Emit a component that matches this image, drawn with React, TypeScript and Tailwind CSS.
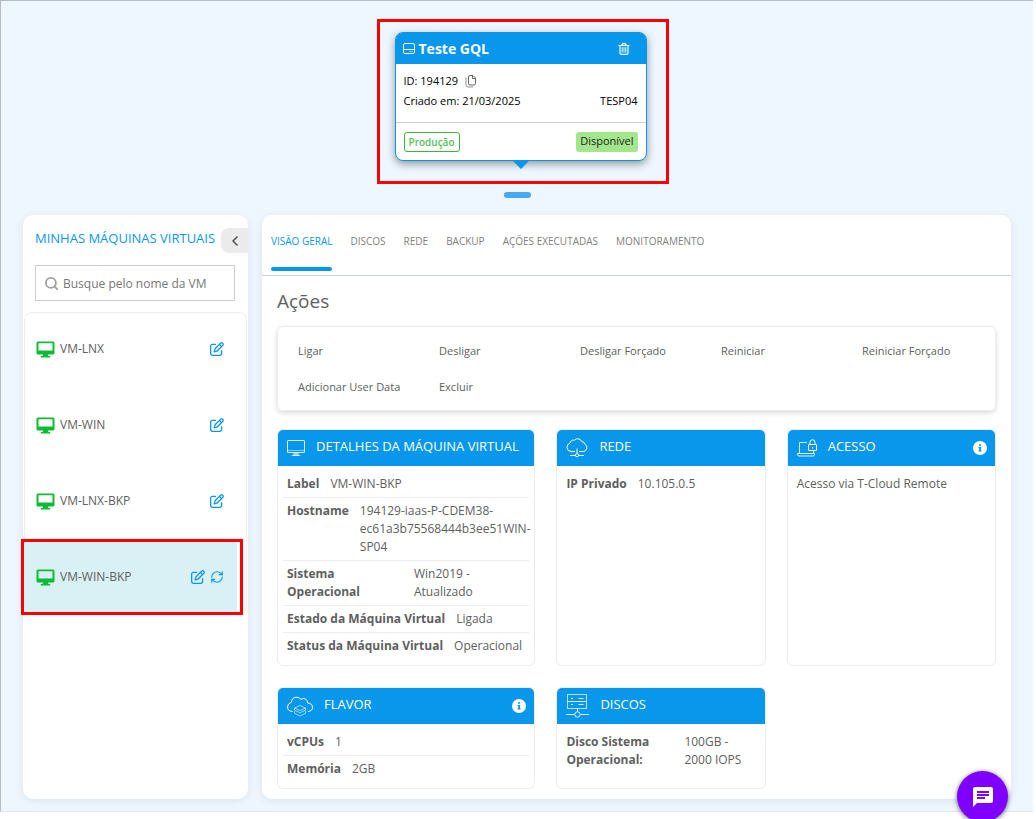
import { useState } from "react";
import type { ReactNode } from "react";
import clsx from "clsx";
import { ChevronLeft, RefreshCw, Search } from "lucide-react";
import { FaRegPenToSquare } from "react-icons/fa6";
import { MdChat } from "react-icons/md";

const machines = ["VM-LNX", "VM-WIN", "VM-LNX-BKP", "VM-WIN-BKP"];
const tabs = ["Visão geral", "Discos", "Rede", "Backup", "Ações executadas", "Monitoramento"];
const actions = ["Ligar", "Desligar", "Desligar Forçado", "Reiniciar", "Reiniciar Forçado", "Adicionar User Data", "Excluir"];

const DriveIcon = () => (
  <svg viewBox="0 0 12 12" className="w-3 h-3" fill="none" stroke="currentColor">
    <rect x="0.5" y="0.5" width="11" height="10" rx="1.5" />
    <path d="M0.5 6.500h11M6.500 8.500h1M8.500 8.500h1" />
  </svg>
);

const TrashIcon = () => (
  <svg viewBox="0 0 12 12" className="w-3 h-3" fill="none" stroke="currentColor" strokeLinecap="round">
    <path d="M1 2.500h10M3.700 2.300l1-1.600h2.600l1 1.600" strokeWidth="1.2" />
    <path d="M2 2.500v7.500q0 1.400 1.400 1.400h5.200q1.400 0 1.400-1.400V2.500" strokeWidth="1.2" />
    <path d="M4.200 4.500v4.700M6 4.500v4.700M7.800 4.500v4.700" strokeWidth="0.9" />
  </svg>
);

const CopyIcon = () => (
  <svg viewBox="0 0 12 13" className="w-3 h-[13px]" fill="none" stroke="currentColor">
    <path d="M5 .5h3L10.500 3v5.500q0 1.500-1.500 1.500H5q-1.500 0-1.500-1.500V2Q3.500.5 5 .5z" />
    <path d="M7.500.7v2.800h2.800" />
    <path d="M1 2.500v7.500q0 2 2 2h5" strokeOpacity="0.7" />
  </svg>
);

const MonitorIcon = () => (
  <svg viewBox="0 0 19 17" className="w-[19px] h-[17px] text-[#0dbb36]">
    <path
      fill="currentColor"
      fillRule="evenodd"
      d="M2 .5h15q1.500 0 1.500 1.500v10q0 1.500-1.500 1.500h-5l.4 1.500h1.800V16.500H4.800V15h1.800l.4-1.500H2q-1.500 0-1.500-1.500V2Q.5.5 2 .5zM2.500 2.300v7.200h14V2.300z"
    />
  </svg>
);

const ScreenIcon = () => (
  <svg viewBox="0 0 18 17" className="w-[18px] h-[17px]" fill="none" stroke="currentColor" strokeOpacity="0.85">
    <rect x="0.5" y="0.5" width="17" height="12" rx="0.5" />
    <path d="M1 10.500h16" strokeOpacity="0.5" />
    <path d="M7 13h4l2 3H5z" fill="currentColor" fillOpacity="0.6" stroke="none" />
    <path d="M4.500 15.500h9" strokeOpacity="0.5" />
  </svg>
);

const CloudNetworkIcon = () => (
  <svg viewBox="0 0 22 20" className="w-[22px] h-5" fill="none" stroke="currentColor">
    <path d="M9 13.500H5a4.300 4.300 0 0 1-1-8.400Q5 1.500 8.300 2.200 10.200.1 13 1q2.200.8 2.800 2.700 2.600.1 3.500 2.800a3.900 3.900 0 0 1-1.800 7H13" />
    <path d="M11 10.500V15M4 17.500h5M13 17.500h5" />
    <circle cx="11" cy="17.200" r="1.600" />
  </svg>
);

const LaptopLockIcon = () => (
  <svg viewBox="0 0 20 18" className="w-5 h-[18px]" fill="none" stroke="currentColor">
    <path d="M10 3.500H2.500V14M16.500 12v2" strokeOpacity="0.8" />
    <path d="M.5 14.500h17v1q0 1.500-1.500 1.500H2Q.5 17 .5 15.500z" strokeOpacity="0.9" />
    <rect x="11.5" y="5.5" width="8" height="6" rx="0.5" />
    <path d="M13 5.500V3.500q0-2.800 2.500-2.800T18 3.500v2M15.500 8v1.500" />
  </svg>
);

const CloudLayersIcon = () => (
  <svg viewBox="0 0 26 21" className="w-[26px] h-[21px]" fill="none" stroke="currentColor">
    <path d="M5.500 15.500Q.5 15 .5 11q0-3.500 3.700-4.500Q5 1 10 1.200q2.500.1 4 2.300Q16 1.500 18.500 3q2.200 1.200 2 4 5 .2 5 4.500 0 3.500-4.500 4" />
    <path
      d="M13 9.500l5.500 2.500-5.500 2.600L7.500 12zM7.500 12v2.200l5.500 2.600 5.500-2.600V12M7.500 15v2.200l5.500 2.900 5.500-2.900V15"
      strokeWidth="0.8"
      strokeOpacity="0.75"
    />
  </svg>
);

const ServerIcon = () => (
  <svg viewBox="0 0 23 24" className="w-[23px] h-6" fill="none" stroke="currentColor" strokeOpacity="0.85">
    <rect x="1.5" y="0.5" width="19" height="14" strokeOpacity="0.7" />
    <path d="M1.500 7.500h19M5 4.500h2M12.500 4.500h5M5 10.500h2M12.500 10.500h5" />
    <path d="M11.500 14.500v3M0 20.500h8.500M14.500 20.500H23" />
    <circle cx="11.5" cy="20.500" r="2.700" />
  </svg>
);

const InfoIcon = () => (
  <svg viewBox="0 0 14 14" className="w-3.5 h-3.5">
    <circle cx="7" cy="7" r="7" fill="#fff" />
    <path d="M6 3.200h2v1.600H6zM5.500 6H8v3.500h.8v1H5.400v-1h.8V7h-.7z" fill="#0997eb" />
  </svg>
);

const Row = ({ label, children, labelClass }: { label: string; children: ReactNode; labelClass?: string }) => (
  <div className="flex gap-[11px] px-1 py-1 border-b border-[#ededed] last:border-b-0">
    <dt className={clsx("font-bold", labelClass)}>{label}</dt>
    <dd className="min-w-0">{children}</dd>
  </div>
);

type CardProps = {
  title: string;
  icon: ReactNode;
  info?: boolean;
  children: ReactNode;
};

const Card = ({ title, icon, info, children }: CardProps) => (
  <section className="rounded-md border border-[#ededed] overflow-hidden">
    <header className="h-9 pl-[9px] pr-2 flex items-center bg-[#0997eb] text-white">
      {icon}
      <h3 className="ml-[11px] pb-1 text-[13px] leading-5">{title}</h3>
      {info && (
        <button aria-label={`Informações sobre ${title}`} className="ml-auto">
          <InfoIcon />
        </button>
      )}
    </header>
    <div className="p-[5px] pb-1.5 text-xs leading-[18px]">{children}</div>
  </section>
);

const ProjectCard = () => (
  <article className="relative w-[252px] rounded-lg border border-[#0997eb] bg-white text-black text-[11px] leading-5 shadow-[0_3px_8px_rgba(0,0,0,0.4)]">
    <header className="h-[31px] rounded-t-md pl-[7px] pr-2 flex items-center gap-1 bg-[#0997eb] text-white">
      <DriveIcon />
      <h1 className="text-sm font-bold">Teste GQL</h1>
      <button aria-label="Excluir projeto" className="ml-auto mr-2">
        <TrashIcon />
      </button>
    </header>
    <div className="h-[59px] px-2 pt-[7px] border-b border-[#cbced8]">
      <div className="flex items-center gap-[7px]">
        ID: 194129
        <button aria-label="Copiar ID" className="text-[#666]">
          <CopyIcon />
        </button>
      </div>
      <div className="flex justify-between">
        <span>Criado em: 21/03/2025</span>
        <span>TESP04</span>
      </div>
    </div>
    <div className="h-[37px] px-2 flex items-center justify-between text-[11px] leading-[18px]">
      <span className="rounded-[3px] border border-[#3cb53c] px-1 text-[10px] font-semibold text-[#56c156]">Produção</span>
      <span className="h-5 rounded-[3px] bg-[#a2e78c] px-1 text-[#222]">Disponível</span>
    </div>
    <span className="absolute top-full left-1/2 -translate-x-1/2 border-x-9 border-t-9 border-x-transparent border-t-[#0997eb]" />
  </article>
);

const Sidebar = ({ selected, onSelect }: { selected: string; onSelect: (name: string) => void }) => (
  <aside className="w-[225px] shrink-0 rounded-[10px] bg-white shadow-[0_2px_10px_rgba(0,0,0,0.08)]">
    <div className="flex items-start justify-between pt-[13px] pl-3">
      <h2 className="text-[13px] leading-5 text-[#0997eb] whitespace-nowrap">MINHAS MÁQUINAS VIRTUAIS</h2>
      <button aria-label="Recolher" className="w-[27px] h-[25px] rounded-l-lg bg-[#ebebeb] flex items-center justify-center">
        <ChevronLeft className="w-4 h-4 text-[#555]" strokeWidth={2.5} />
      </button>
    </div>
    <label className="ml-3 mr-[13px] mt-3 mb-[11px] h-9 px-2 flex items-center gap-1 border border-[#cbced8]">
      <Search className="w-[15px] h-[15px] shrink-0 text-[#a0a0a0]" strokeWidth={3} />
      <input
        aria-label="Busque pelo nome da VM"
        placeholder="Busque pelo nome da VM"
        className="w-full min-w-0 pt-0.5 text-xs outline-none placeholder:text-[#777]"
      />
    </label>
    <ul className="mx-px rounded-lg border border-[#ededed] flex flex-col gap-1">
      {machines.map((name) => {
        const active = name === selected;
        return (
          <li key={name} className={clsx("relative mr-[9px] h-[72px] pl-[11px] pr-[13px] flex items-center", active && "bg-[#d9f0f4]")}>
            <button onClick={() => onSelect(name)} className="flex items-center gap-[5px] text-xs leading-[18px]">
              <MonitorIcon />
              {name}
            </button>
            <div className="ml-auto flex gap-[5px] text-[#0997eb]">
              <button aria-label={`Editar ${name}`}>
                <FaRegPenToSquare className="w-3.5 h-3.5" />
              </button>
              {active && (
                <button aria-label={`Atualizar ${name}`}>
                  <RefreshCw className="w-3.5 h-3.5" />
                </button>
              )}
            </div>
            {active && <span className="absolute -inset-y-0.5 -left-1 -right-1.5 border-3 border-[#fe0000] pointer-events-none" />}
          </li>
        );
      })}
    </ul>
  </aside>
);

const App = () => {
  const [tab, setTab] = useState(tabs[0]);
  const [selected, setSelected] = useState("VM-WIN-BKP");

  return (
    <div className="font-['Open_Sans','Liberation_Sans',sans-serif] text-[#606060]">
      <div className="mr-[3px] pt-[18px] px-[22px] pb-3 bg-[#eef7ff] border border-r-0 border-[#b9bcc8] border-b-[#e0e7ec]">
        <div className="flex flex-col items-center">
          <div className="ml-[11px] w-[292px] h-[165px] border-3 border-[#fe0000] pt-[10px] pl-[15px]">
            <ProjectCard />
          </div>
          <button aria-label="Recolher projetos" className="mt-2 mb-[17px] w-[27px] h-1.5 rounded-full bg-[#45abee]" />
        </div>

        <div className="flex gap-[14px]">
          <Sidebar selected={selected} onSelect={setSelected} />

          <main className="flex-1 min-w-0 rounded-[10px] bg-white shadow-[0_2px_10px_rgba(0,0,0,0.08)]">
            <nav className="h-[61px] px-[9px] flex items-end gap-[18px] border-b border-[#cbd2d9] text-[10px] leading-[18px]">
              {tabs.map((name) => (
                <button
                  key={name}
                  onClick={() => setTab(name)}
                  className={clsx(
                    "relative h-[39px] mb-1 flex items-start uppercase",
                    name === tab ? "text-[#0997eb]" : "text-[#808080]"
                  )}
                >
                  {name}
                  {name === tab && <span className="absolute bottom-0 inset-x-0 h-1 rounded-full bg-[#0997eb]" />}
                </button>
              ))}
            </nav>

            <div className="px-[15px] pb-[10px]">
              <h2 className="pt-[11px] pb-[11px] text-[19px] leading-7">Ações</h2>
              <div className="mb-[18px] grid grid-cols-5 rounded-md border border-[#ededed] px-1.5 pt-1.5 pb-[5px] shadow-[0_2px_5px_rgba(0,0,0,0.15)]">
                {actions.map((action) => (
                  <button key={action} className="h-9 px-3.5 text-left text-[11px] leading-4">
                    {action}
                  </button>
                ))}
              </div>

              <div className="grid grid-cols-[258fr_209fr_209fr] gap-[21px]">
                <Card title="DETALHES DA MÁQUINA VIRTUAL" icon={<ScreenIcon />}>
                  <dl>
                    <Row label="Label">VM-WIN-BKP</Row>
                    <Row label="Hostname">
                      194129-iaas-P-CDEM38-
                      <wbr />
                      ec61a3b75568444b3ee51WIN-SP04
                    </Row>
                    <Row label="Sistema Operacional" labelClass="w-[116px]">
                      Win2019 -<br />
                      Atualizado
                    </Row>
                    <Row label="Estado da Máquina Virtual">Ligada</Row>
                    <Row label="Status da Máquina Virtual">Operacional</Row>
                  </dl>
                </Card>
                <Card title="REDE" icon={<CloudNetworkIcon />}>
                  <dl>
                    <Row label="IP Privado">10.105.0.5</Row>
                  </dl>
                </Card>
                <Card title="ACESSO" icon={<LaptopLockIcon />} info>
                  <p className="px-1 py-1">Acesso via T-Cloud Remote</p>
                </Card>
                <Card title="FLAVOR" icon={<CloudLayersIcon />} info>
                  <dl>
                    <Row label="vCPUs">1</Row>
                    <Row label="Memória">2GB</Row>
                  </dl>
                </Card>
                <Card title="DISCOS" icon={<ServerIcon />}>
                  <dl>
                    <Row label="Disco Sistema Operacional:" labelClass="w-[107px]">
                      100GB -<br />
                      2000 IOPS
                    </Row>
                  </dl>
                </Card>
              </div>
            </div>
          </main>
        </div>
      </div>

      <button
        aria-label="Abrir chat"
        className="fixed right-7 -bottom-[3px] size-[51px] rounded-full bg-[#8000ff] text-white flex items-center justify-center shadow-[0_1px_5px_rgba(0,0,0,0.6)]"
      >
        <MdChat className="w-6 h-6" />
      </button>
    </div>
  );
};

export default App;
